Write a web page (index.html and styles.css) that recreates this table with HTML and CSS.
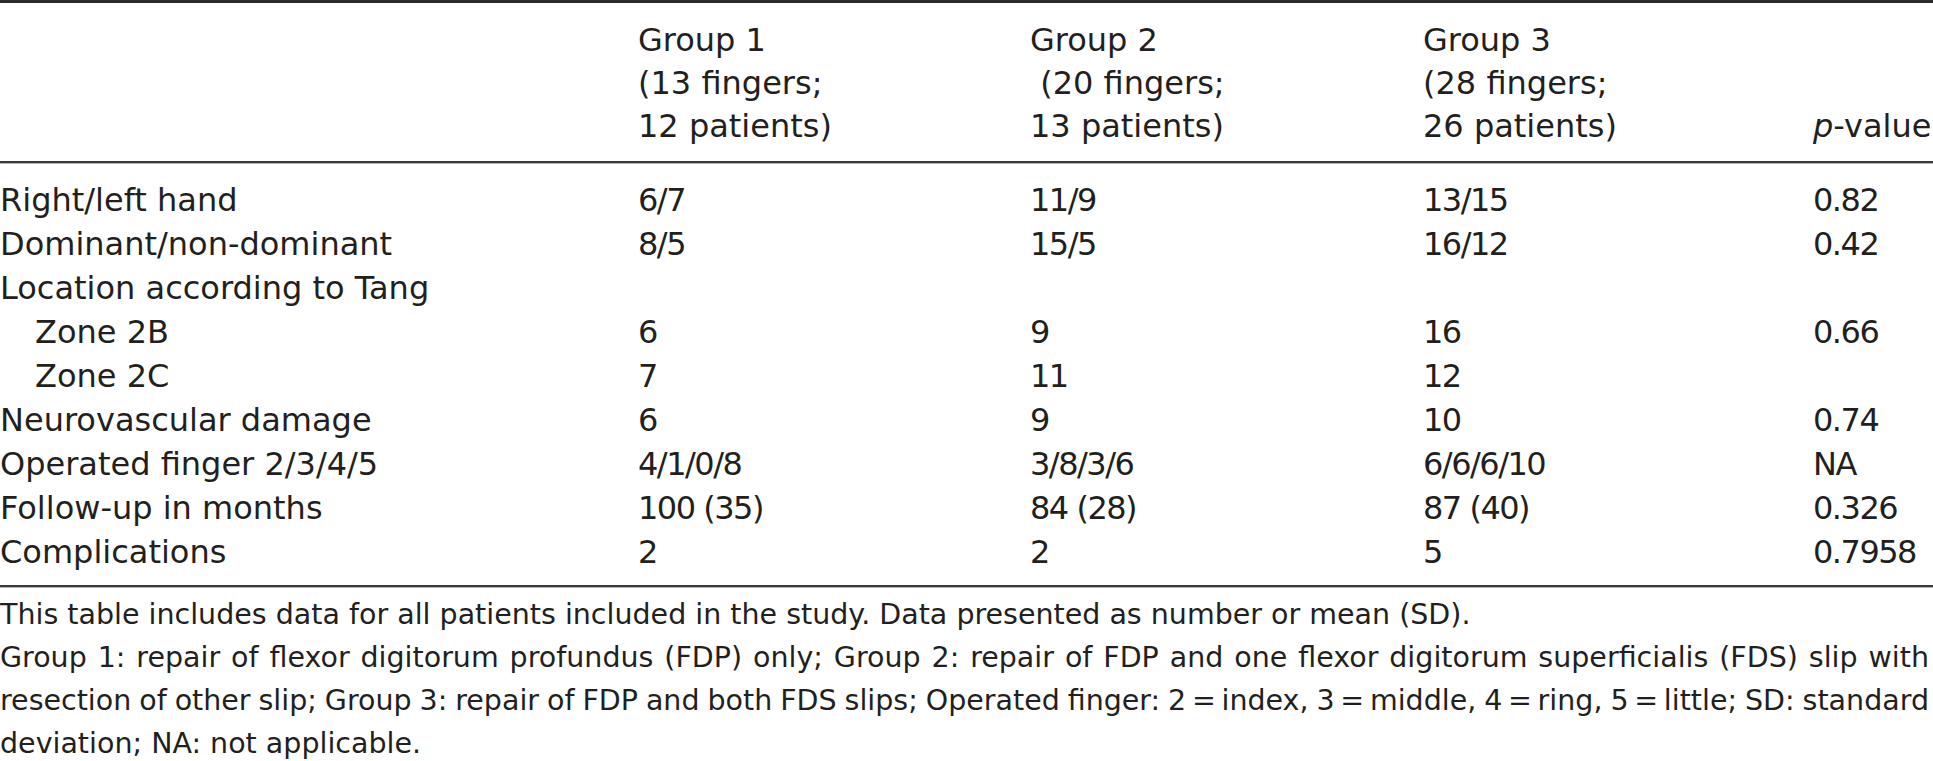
FILE: index.html
```html
<!DOCTYPE html>
<html lang="en">
<head>
<meta charset="utf-8">
<title>Table</title>
<link rel="stylesheet" href="styles.css">
</head>
<body>
<div class="sheet">
  <div class="rule rule-top"></div>
  <div class="row head">
    <div class="cell"></div>
    <div class="cell">Group 1<br>(13 fingers;<br>12 patients)</div>
    <div class="cell">Group 2<br>&nbsp;(20 fingers;<br>13 patients)</div>
    <div class="cell">Group 3<br>(28 fingers;<br>26 patients)</div>
    <div class="cell"><i>p</i>-value</div>
  </div>
  <div class="rule rule-mid"></div>
  <div class="body">
    <div class="row"><div class="cell">Right/left hand</div><div class="cell num">6/7</div><div class="cell num">11/9</div><div class="cell num">13/15</div><div class="cell num">0.82</div></div>
    <div class="row"><div class="cell">Dominant/non-dominant</div><div class="cell num">8/5</div><div class="cell num">15/5</div><div class="cell num">16/12</div><div class="cell num">0.42</div></div>
    <div class="row"><div class="cell">Location according to Tang</div><div class="cell"></div><div class="cell"></div><div class="cell"></div><div class="cell"></div></div>
    <div class="row"><div class="cell indent">Zone 2B</div><div class="cell num">6</div><div class="cell num">9</div><div class="cell num">16</div><div class="cell num">0.66</div></div>
    <div class="row"><div class="cell indent">Zone 2C</div><div class="cell num">7</div><div class="cell num">11</div><div class="cell num">12</div><div class="cell"></div></div>
    <div class="row"><div class="cell">Neurovascular damage</div><div class="cell num">6</div><div class="cell num">9</div><div class="cell num">10</div><div class="cell num">0.74</div></div>
    <div class="row"><div class="cell">Operated finger 2/3/4/5</div><div class="cell num">4/1/0/8</div><div class="cell num">3/8/3/6</div><div class="cell num">6/6/6/10</div><div class="cell num">NA</div></div>
    <div class="row"><div class="cell">Follow-up in months</div><div class="cell num">100 (35)</div><div class="cell num">84 (28)</div><div class="cell num">87 (40)</div><div class="cell num">0.326</div></div>
    <div class="row"><div class="cell">Complications</div><div class="cell num">2</div><div class="cell num">2</div><div class="cell num">5</div><div class="cell num">0.7958</div></div>
  </div>
  <div class="rule rule-mid"></div>
  <div class="notes">
    <p class="line">This table includes data for all patients included in the study. Data presented as number or mean (SD).</p>
    <p class="line just">Group 1: repair of flexor digitorum profundus (FDP) only; Group 2: repair of FDP and one flexor digitorum superficialis (FDS) slip with</p>
    <p class="line just">resection of other slip; Group 3: repair of FDP and both FDS slips; Operated finger: 2&#8201;=&#8201;index, 3&#8201;=&#8201;middle, 4&#8201;=&#8201;ring, 5&#8201;=&#8201;little; SD: standard</p>
    <p class="line">deviation; NA: not applicable.</p>
  </div>
</div>
</body>
</html>
```
FILE: styles.css
```css
html, body {
  margin: 0;
  padding: 0;
  background: #ffffff;
}
body {
  overflow: hidden;
  font-family: "DejaVu Sans", "Liberation Sans", sans-serif;
  color: #231f20;
}
.sheet {
  width: 2100px;
}
.rule {
  width: 100%;
}
.rule-top {
  height: 3px;
  background: #2b2b2b;
}
.rule-mid {
  height: 2px;
  background: #3a3a3a;
  border-bottom: 1px solid #b5b5b5;
}
.row {
  display: grid;
  grid-template-columns: 638px 392px 393px 390px 1fr;
  font-size: 32px;
}
.head {
  padding: 16px 0 13px;
  line-height: 43px;
  align-items: end;
}
.body {
  padding: 14px 0 11px;
}
.body .row {
  line-height: 44px;
}
.cell {
  white-space: nowrap;
}
.num {
  letter-spacing: -1.5px;
}
.indent {
  padding-left: 35px;
}
.notes {
  padding-top: 5px;
  font-size: 28.5px;
  line-height: 43px;
}
.line {
  margin: 0;
  white-space: nowrap;
}
.just {
  width: 1929px;
  word-spacing: -2px;
  text-align: justify;
  text-align-last: justify;
}
```
